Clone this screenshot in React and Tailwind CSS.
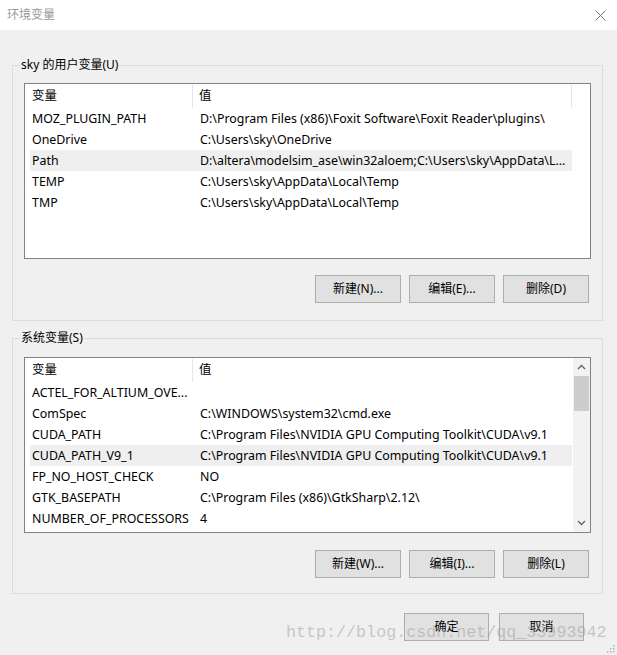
import React from 'react';

const userVars = [
  { name: 'MOZ_PLUGIN_PATH', value: 'D:\\Program Files (x86)\\Foxit Software\\Foxit Reader\\plugins\\' },
  { name: 'OneDrive', value: 'C:\\Users\\sky\\OneDrive' },
  { name: 'Path', value: 'D:\\altera\\modelsim_ase\\win32aloem;C:\\Users\\sky\\AppData\\L...', selected: true },
  { name: 'TEMP', value: 'C:\\Users\\sky\\AppData\\Local\\Temp' },
  { name: 'TMP', value: 'C:\\Users\\sky\\AppData\\Local\\Temp' },
];

const sysVars = [
  { name: 'ACTEL_FOR_ALTIUM_OVE...', value: '' },
  { name: 'ComSpec', value: 'C:\\WINDOWS\\system32\\cmd.exe' },
  { name: 'CUDA_PATH', value: 'C:\\Program Files\\NVIDIA GPU Computing Toolkit\\CUDA\\v9.1' },
  { name: 'CUDA_PATH_V9_1', value: 'C:\\Program Files\\NVIDIA GPU Computing Toolkit\\CUDA\\v9.1', selected: true },
  { name: 'FP_NO_HOST_CHECK', value: 'NO' },
  { name: 'GTK_BASEPATH', value: 'C:\\Program Files (x86)\\GtkSharp\\2.12\\' },
  { name: 'NUMBER_OF_PROCESSORS', value: '4' },
];

const Button = ({ children, width = 'w-[86px]' }) => (
  <button className={`h-[28px] bg-[#e1e1e1] border border-[#adadad] text-[12px] text-black ${width}`}>
    {children}
  </button>
);

const Chevron = ({ up }) => (
  <svg width="9" height="6" viewBox="0 0 9 6">
    <path d={up ? 'M1 5 L4.5 1.5 L8 5' : 'M1 1 L4.5 4.5 L8 1'} fill="none" stroke="#606060" strokeWidth="1.3" />
  </svg>
);

const VarList = ({ rows, scroll }) => (
  <div className="h-[176px] border border-[#828282] bg-white flex">
    <div className="flex-1 flex flex-col min-w-0">
      <div className="h-[24px] flex items-stretch shrink-0 pt-[1px]">
        <div className="w-[168px] pl-[7px] flex items-center border-r border-[#e5e5e5]">变量</div>
        <div className={`${scroll ? 'flex-1' : 'w-[379px] border-r border-[#e5e5e5]'} pl-[6px] flex items-center`}>值</div>
      </div>
      {rows.map((r, i) => (
        <div key={i} className={`ml-[5px] w-[542px] h-[21px] pt-[2px] flex items-center ${r.selected ? 'bg-[#efefef]' : ''}`}>
          <div className="w-[163px] pl-[2px] whitespace-nowrap">{r.name}</div>
          <div className="pl-[7px] whitespace-nowrap">{r.value}</div>
        </div>
      ))}
    </div>
    {scroll && (
      <div className="w-[17px] bg-[#f2f2f2] flex flex-col items-center">
        <div className="h-[18px] flex items-center justify-center"><Chevron up /></div>
        <div className="w-[15px] h-[35px] bg-[#cdcdcd]" />
        <div className="flex-1" />
        <div className="h-[18px] flex items-center justify-center"><Chevron /></div>
      </div>
    )}
  </div>
);

export default function App() {
  return (
    <div
      className="w-[617px] h-[655px] bg-[#f0f0f0] relative overflow-hidden text-[12.4px] text-black"
      style={{ fontFamily: '"Noto Sans", "Noto Sans CJK SC", sans-serif' }}
    >
      <div className="h-[30px] bg-white flex items-center justify-between pl-[7px] pr-[11px]">
        <span className="text-[#9a9a9a] text-[12px]">环境变量</span>
        <svg width="11" height="11" viewBox="0 0 11 11">
          <path d="M0.5 0.5 L10.5 10.5 M10.5 0.5 L0.5 10.5" stroke="#707070" strokeWidth="1" />
        </svg>
      </div>

      <div className="pl-[12px] pr-[14px] pt-[27px]">
        <fieldset className="border border-[#dcdcdc] px-[11px] pt-[10px] pb-[17px]">
          <legend className="ml-[-4px] px-[1px] leading-[16px] text-[12px]">sky 的用户变量(U)</legend>
          <VarList rows={userVars} />
          <div className="mt-[16px] flex justify-end gap-[8px] pr-[2px]">
            <Button>新建(N)...</Button>
            <Button>编辑(E)...</Button>
            <Button>删除(D)</Button>
          </div>
        </fieldset>

        <fieldset className="mt-[9px] border border-[#dcdcdc] px-[11px] pt-[11px] pb-[15px]">
          <legend className="ml-[-4px] px-[1px] leading-[16px] text-[12px]">系统变量(S)</legend>
          <VarList rows={sysVars} scroll />
          <div className="mt-[17px] flex justify-end gap-[8px] pr-[2px]">
            <Button>新建(W)...</Button>
            <Button>编辑(I)...</Button>
            <Button>删除(L)</Button>
          </div>
        </fieldset>

        <div className="mt-[19px] flex justify-end gap-[10px] pr-[19px]">
          <Button width="w-[85px]">确定</Button>
          <Button width="w-[85px]">取消</Button>
        </div>
      </div>

      <div
        className="absolute left-[286px] top-[623px] text-[16.7px] leading-[20px] text-[#9a9a9a]/50 whitespace-nowrap pointer-events-none"
        style={{ fontFamily: '"Liberation Mono", monospace' }}
      >
        http://blog.csdn.net/qq_33993942
      </div>

      <svg className="absolute right-[2px] bottom-[2px]" width="8" height="8" viewBox="0 0 8 8">
        <g fill="#b0b0b0">
          <rect x="6" y="0" width="1.5" height="1.5" />
          <rect x="3" y="3" width="1.5" height="1.5" />
          <rect x="6" y="3" width="1.5" height="1.5" />
          <rect x="0" y="6" width="1.5" height="1.5" />
          <rect x="3" y="6" width="1.5" height="1.5" />
          <rect x="6" y="6" width="1.5" height="1.5" />
        </g>
      </svg>
    </div>
  );
}
